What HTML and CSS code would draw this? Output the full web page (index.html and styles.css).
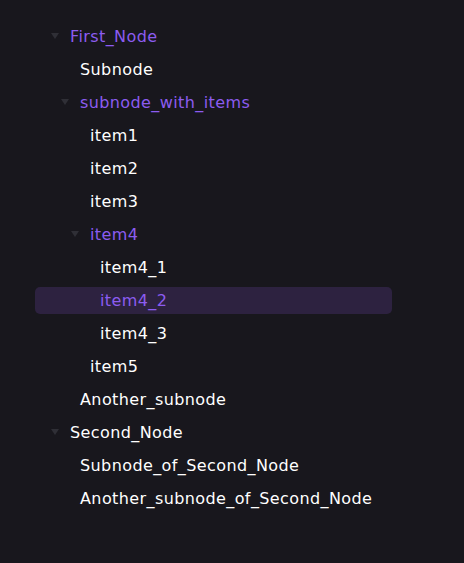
FILE: index.html
```html
<!DOCTYPE html>
<html>
<head>
<meta charset="utf-8">
<link rel="stylesheet" href="styles.css">
</head>
<body>
<ul class="tree">
  <li class="row l0 open"><span class="caret"></span><span class="label">First_Node</span></li>
  <li class="row l1"><span class="label">Subnode</span></li>
  <li class="row l1 open"><span class="caret"></span><span class="label">subnode_with_items</span></li>
  <li class="row l2"><span class="label">item1</span></li>
  <li class="row l2"><span class="label">item2</span></li>
  <li class="row l2"><span class="label">item3</span></li>
  <li class="row l2 open"><span class="caret"></span><span class="label">item4</span></li>
  <li class="row l3"><span class="label">item4_1</span></li>
  <li class="row l3 selected"><span class="label">item4_2</span></li>
  <li class="row l3"><span class="label">item4_3</span></li>
  <li class="row l2"><span class="label">item5</span></li>
  <li class="row l1"><span class="label">Another_subnode</span></li>
  <li class="row l0 closed"><span class="caret"></span><span class="label">Second_Node</span></li>
  <li class="row l1"><span class="label">Subnode_of_Second_Node</span></li>
  <li class="row l1"><span class="label">Another_subnode_of_Second_Node</span></li>
</ul>
</body>
</html>
```
FILE: styles.css
```css
html, body {
  margin: 0;
  padding: 0;
  background: #18171d;
  height: 100%;
}
body {
  font-family: "DejaVu Sans", sans-serif;
  font-size: 16px;
  letter-spacing: 0.4px;
  color: #ffffff;
}
.tree {
  list-style: none;
  margin: 0;
  padding: 23px 0 0 35px;
  width: 357px;
  display: flex;
  flex-direction: column;
  gap: 6px;
}
.row {
  position: relative;
  height: 27px;
  display: flex;
  align-items: center;
  border-radius: 5px;
}
.l0 { padding-left: 35px; }
.l1 { padding-left: 45px; }
.l2 { padding-left: 55px; }
.l3 { padding-left: 65px; }
.caret {
  position: absolute;
  width: 0;
  height: 0;
  border-left: 4px solid transparent;
  border-right: 4px solid transparent;
  border-top: 6px solid #2f2f36;
  margin-left: -19px;
  top: 10px;
}
.open > .label { color: #8c5cf0; }
.selected { background: #2d2240; }
.selected > .label { color: #8c5cf0; }
```
